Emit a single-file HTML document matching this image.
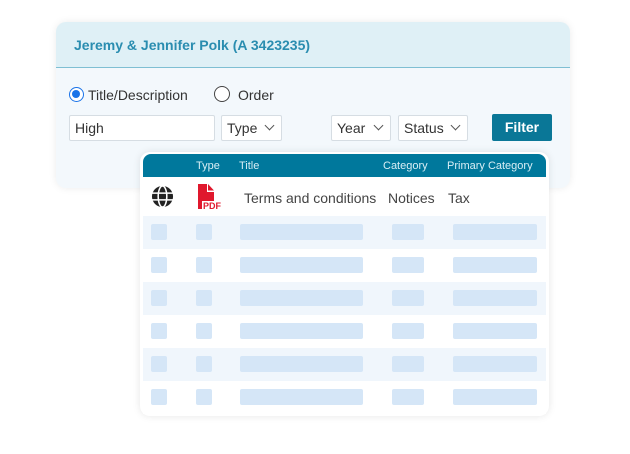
<!DOCTYPE html>
<html><head><style>
*{box-sizing:border-box;margin:0;padding:0}
body{width:630px;height:454px;background:#fff;font-family:"Liberation Sans",sans-serif;position:relative;overflow:hidden}
.card{position:absolute;left:56px;top:22px;width:514px;height:166px;background:#f3f8fc;border-radius:10px;box-shadow:0 0 8px rgba(0,0,0,.08);overflow:hidden}
.hd{height:46px;background:#dff0f6;border-bottom:1px solid #7fbfd3;padding:15px 0 0 18px;color:#2a8db0;font-weight:bold;font-size:14px}
.abs{position:absolute}
.inp{position:absolute;top:115px;height:26px;background:#fff;border:1px solid #d6dde3;border-radius:2px;font-size:14px;color:#333;padding:4px 0 0 5px}
.chev{position:absolute;right:8px;top:6px;width:7px;height:7px;border-right:1.3px solid #555;border-bottom:1.3px solid #555;transform:rotate(45deg)}
.tbl{position:absolute;left:140px;top:152px;width:409px;height:264px;background:#fff;border-radius:10px;box-shadow:0 0 8px rgba(0,0,0,.1)}
.th{position:absolute;left:143px;top:154px;width:403px;height:23px;background:#00789c;border-radius:8px 8px 0 0;color:#d8eef5;font-size:11px}
.th span{position:absolute;top:6px}
.row{position:absolute;left:143px;width:403px;height:33px}
.ph{position:absolute;top:8px;height:16px;background:#d5e6f7;border-radius:2px}
</style></head><body>
<div class="card"><div class="hd">Jeremy &amp; Jennifer Polk (A 3423235)</div></div>
<div class="abs" style="left:69px;top:87px;width:15px;height:15px;border:1.5px solid #1a73e8;border-radius:50%;background:#fff"><div style="position:absolute;left:2px;top:2px;width:8px;height:8px;border-radius:50%;background:#1a73e8"></div></div>
<div class="abs" style="left:88px;top:87px;font-size:14px;color:#333">Title/Description</div>
<div class="abs" style="left:214px;top:86px;width:16px;height:16px;border:1.3px solid #444;border-radius:50%;background:#fff"></div>
<div class="abs" style="left:238px;top:87px;font-size:14px;color:#333">Order</div>
<div class="inp" style="left:69px;width:146px">High</div>
<div class="inp" style="left:221px;width:61px">Type<div class="chev"></div></div>
<div class="inp" style="left:331px;width:60px">Year<div class="chev"></div></div>
<div class="inp" style="left:398px;width:70px">Status<div class="chev"></div></div>
<div class="abs" style="left:492px;top:114px;width:60px;height:27px;background:#0a7797;border-radius:2px;color:#fff;font-weight:bold;font-size:14px;text-align:center;padding-top:5px">Filter</div>
<div class="tbl"></div>
<div class="th"><span style="left:53px">Type</span><span style="left:96px">Title</span><span style="left:240px">Category</span><span style="left:304px">Primary Category</span></div>
<div class="row" style="top:177px;height:39px;background:#fff;font-size:14px;color:#444">
<svg class="abs" style="left:8px;top:8px" width="23" height="23" viewBox="0 0 24 24"><circle cx="12" cy="12" r="11" fill="#222"/><g stroke="#fff" stroke-width="1.6" fill="none"><ellipse cx="12" cy="12" rx="4.5" ry="11"/><line x1="1" y1="8.5" x2="23" y2="8.5"/><line x1="1" y1="15.5" x2="23" y2="15.5"/></g></svg>
<svg class="abs" style="left:54px;top:6px" width="26" height="27" viewBox="0 0 26 27"><path d="M1 1h9v8h7v9H1z" fill="#e0182d"/><path d="M11 1l6 6.5h-6z" fill="#e0182d"/><path d="M1 18h4v8H1z" fill="#e0182d"/><text x="6" y="26" font-size="9" font-weight="bold" fill="#e0182d" font-family="Liberation Sans">PDF</text></svg>
<span class="abs" style="left:101px;top:13px">Terms and conditions</span><span class="abs" style="left:245px;top:13px">Notices</span><span class="abs" style="left:305px;top:13px">Tax</span></div>
<div class="row" style="top:216px;background:#f0f6fc"><div class="ph" style="left:8px;width:16px"></div><div class="ph" style="left:53px;width:16px"></div><div class="ph" style="left:97px;width:123px"></div><div class="ph" style="left:249px;width:32px"></div><div class="ph" style="left:310px;width:84px"></div></div>
<div class="row" style="top:249px;background:#fff"><div class="ph" style="left:8px;width:16px"></div><div class="ph" style="left:53px;width:16px"></div><div class="ph" style="left:97px;width:123px"></div><div class="ph" style="left:249px;width:32px"></div><div class="ph" style="left:310px;width:84px"></div></div>
<div class="row" style="top:282px;background:#f0f6fc"><div class="ph" style="left:8px;width:16px"></div><div class="ph" style="left:53px;width:16px"></div><div class="ph" style="left:97px;width:123px"></div><div class="ph" style="left:249px;width:32px"></div><div class="ph" style="left:310px;width:84px"></div></div>
<div class="row" style="top:315px;background:#fff"><div class="ph" style="left:8px;width:16px"></div><div class="ph" style="left:53px;width:16px"></div><div class="ph" style="left:97px;width:123px"></div><div class="ph" style="left:249px;width:32px"></div><div class="ph" style="left:310px;width:84px"></div></div>
<div class="row" style="top:348px;background:#f0f6fc"><div class="ph" style="left:8px;width:16px"></div><div class="ph" style="left:53px;width:16px"></div><div class="ph" style="left:97px;width:123px"></div><div class="ph" style="left:249px;width:32px"></div><div class="ph" style="left:310px;width:84px"></div></div>
<div class="row" style="top:381px;background:#fff"><div class="ph" style="left:8px;width:16px"></div><div class="ph" style="left:53px;width:16px"></div><div class="ph" style="left:97px;width:123px"></div><div class="ph" style="left:249px;width:32px"></div><div class="ph" style="left:310px;width:84px"></div></div>
</body></html>
